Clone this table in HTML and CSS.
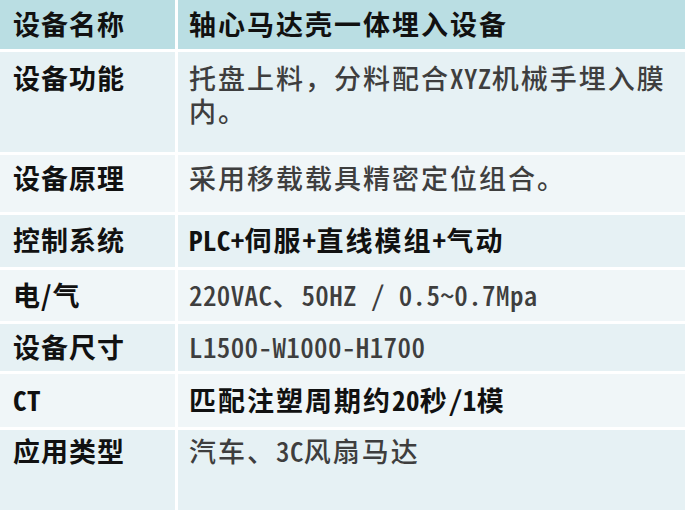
FILE: index.html
```html
<!DOCTYPE html>
<html lang="zh-CN">
<head>
<meta charset="utf-8">
<title>设备参数</title>
<link rel="stylesheet" href="styles.css">
</head>
<body>
<div class="sheet">
  <div class="cell label tone-head">设备名称</div>
  <div class="cell value strong tone-head">轴心马达壳一体埋入设备</div>

  <div class="cell label tone-a top top-func">设备功能</div>
  <div class="cell value tone-a top top-func"><p class="text">托盘上料，分料配合<span class="latin">XYZ</span>机械手埋入膜内。</p></div>

  <div class="cell label tone-b top top-principle">设备原理</div>
  <div class="cell value tone-b top top-principle">采用移载载具精密定位组合。</div>

  <div class="cell label tone-a">控制系统</div>
  <div class="cell value strong tone-a"><p class="text"><span class="latin">PLC+</span>伺服<span class="latin">+</span>直线模组<span class="latin">+</span>气动</p></div>

  <div class="cell label tone-b">电/气</div>
  <div class="cell value tone-b"><p class="text"><span class="latin">220VAC</span>、<span class="latin">50HZ / 0.5~0.7Mpa</span></p></div>

  <div class="cell label tone-a">设备尺寸</div>
  <div class="cell value tone-a"><p class="text"><span class="latin">L1500-W1000-H1700</span></p></div>

  <div class="cell label tone-b"><span class="latin">CT</span></div>
  <div class="cell value strong tone-b"><p class="text">匹配注塑周期约<span class="latin">20</span>秒<span class="latin">/1</span>模</p></div>

  <div class="cell label tone-a top top-use">应用类型</div>
  <div class="cell value tone-a top top-use"><p class="text">汽车、<span class="latin">3C</span>风扇马达</p></div>
</div>
</body>
</html>
```

FILE: styles.css
```css
html, body {
  margin: 0;
  padding: 0;
  background: #ffffff;
}

body {
  font-family: "Noto Sans CJK SC", "Noto Sans", sans-serif;
  font-size: 27px;
  line-height: 33px;
}

.sheet {
  display: grid;
  grid-template-columns: 175px 1fr;
  grid-template-rows: 49px 100px 57px 52px 51px 47px 53px 1fr;
  gap: 3px;
  width: 685px;
  height: 510px;
  overflow: hidden;
}

.cell {
  display: flex;
  align-items: center;
  padding: 0 6px 3px 11px;
  overflow: hidden;
}

.cell.top {
  align-items: flex-start;
  padding-bottom: 0;
}

.text {
  margin: 0;
}

.top-func { padding-top: 9px; }
.top-principle { padding-top: 6px; }
.top-use { padding-top: 4px; }

.label {
  padding-left: 13px;
  font-weight: 700;
  color: #111111;
  letter-spacing: 1px;
}

.value {
  letter-spacing: 2px;
  color: #3e3e3e;
  font-weight: 500;
}

.value.strong {
  font-weight: 700;
  color: #111111;
}

.latin {
  font-feature-settings: "hwid";
  letter-spacing: 0.4px;
}

.tone-head { background: #badee3; }
.tone-a { background: #e6f1f4; }
.tone-b { background: #f0f6f8; }
```
